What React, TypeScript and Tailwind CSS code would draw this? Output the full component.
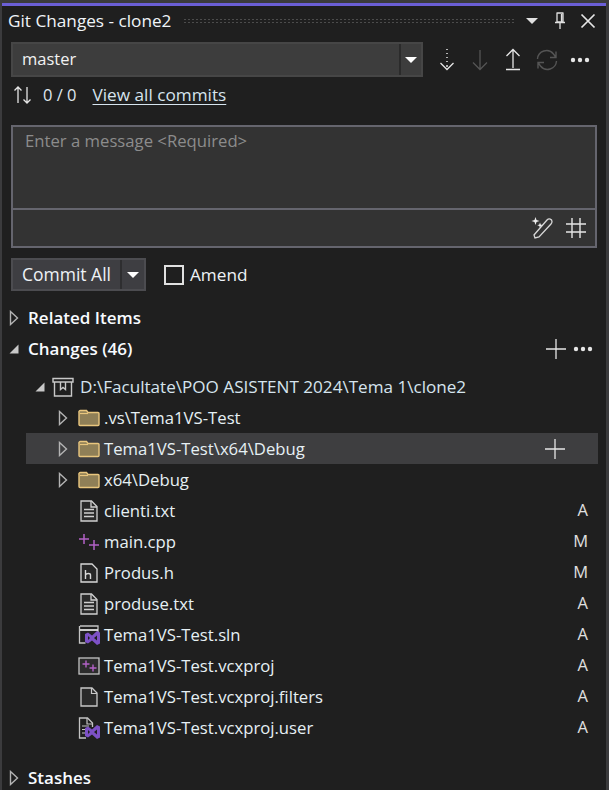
import React from "react";

const font = { fontFamily: '"Open Sans", "Noto Sans", sans-serif' };

function Caret({ open = false, className = "" }: { open?: boolean; className?: string }) {
  return (
    <svg width="12" height="16" viewBox="0 0 12 16" className={className}>
      {open ? (
        <path d="M10.500 3.500v9h-9z" fill="#c8c8c8" />
      ) : (
        <path d="M2.500 1.500l7 6.500-7 6.500z" fill="none" stroke="#b4b4b4" strokeWidth="1.400" />
      )}
    </svg>
  );
}

function Down({ color = "#ffffff" }: { color?: string }) {
  return (
    <svg width="14" height="8" viewBox="0 0 14 8">
      <path d="M1 1h12l-6 6z" fill={color} />
    </svg>
  );
}

function Dots() {
  return (
    <svg width="20" height="6" viewBox="0 0 20 6">
      <circle cx="3" cy="3" r="2.200" fill="#e6e6e6" />
      <circle cx="10" cy="3" r="2.200" fill="#e6e6e6" />
      <circle cx="17" cy="3" r="2.200" fill="#e6e6e6" />
    </svg>
  );
}

function Plus({ size = 20 }: { size?: number }) {
  return (
    <svg width={size} height={size} viewBox="0 0 20 20">
      <path d="M10 0v20M0 10h20" stroke="#e6e6e6" strokeWidth="1.300" fill="none" />
    </svg>
  );
}

function Folder() {
  return (
    <svg width="22" height="18" viewBox="0 0 22 18">
      <path d="M1 3.500V15.500a1 1 0 0 0 1 1h18a1 1 0 0 0 1-1V4.500a1 1 0 0 0-1-1H10L8.500 1.500H2.500a1.500 1.500 0 0 0-1.500 2z" fill="#8f7f57" stroke="#e9c67e" strokeWidth="1.400" />
      <path d="M2 4.500h8" stroke="#e9c67e" strokeWidth="1.200" fill="none" />
    </svg>
  );
}

function TextDoc() {
  return (
    <svg width="18" height="22" viewBox="0 0 18 22">
      <path d="M1 1h10.500L17 6.500V21H1z" fill="#2a2a2a" stroke="#d0d0d0" strokeWidth="1.300" />
      <path d="M11 1v6h6" fill="none" stroke="#d0d0d0" strokeWidth="1.300" />
      <path d="M4 9.500h10M4 13h10M4 16.500h10" stroke="#d0d0d0" strokeWidth="1.300" />
    </svg>
  );
}

function PlusPlus() {
  return (
    <svg width="22" height="18" viewBox="0 0 22 18">
      <path d="M6 1v10M1 6h10M16 7v10M11 12h10" stroke="#b261c6" strokeWidth="1.500" fill="none" />
    </svg>
  );
}

function HeaderDoc() {
  return (
    <svg width="18" height="20" viewBox="0 0 18 20">
      <path d="M1 1h11l5 5v13H1z" fill="#262626" stroke="#d8d8d8" strokeWidth="1.300" />
      <path d="M5.500 7v9M5.500 12c1-2 5-2 5 0v4" fill="none" stroke="#d8d8d8" strokeWidth="1.400" />
    </svg>
  );
}

function VsMark({ x = 0, y = 0 }: { x?: number; y?: number }) {
  return (
    <g transform={`translate(${x} ${y})`}>
      <path d="M0 3l3-1.500 4 3L12 0l3 1.500v11L12 14l-5-4.500-4 3L0 11zM3 5v4l2-2zM12 4.500L9 7l3 2.500z" fill="#7d51c6" fillRule="evenodd" />
    </g>
  );
}

function SlnIcon() {
  return (
    <svg width="22" height="20" viewBox="0 0 22 20">
      <path d="M2 1h18v8M1.500 1v17h6" fill="none" stroke="#c4c4c4" strokeWidth="1.300" />
      <path d="M2 5h18" stroke="#e0e0e0" strokeWidth="1.800" />
      <VsMark x={7} y={6} />
    </svg>
  );
}

function ProjIcon() {
  return (
    <svg width="22" height="18" viewBox="0 0 22 18">
      <rect x="1" y="1" width="20" height="16" fill="#2c2c2c" stroke="#c4c4c4" strokeWidth="1.300" />
      <path d="M8 3.500v7M4.500 7h7M15 7.500v7M11.500 11h7" stroke="#b261c6" strokeWidth="1.400" fill="none" />
    </svg>
  );
}

function BlankDoc() {
  return (
    <svg width="18" height="20" viewBox="0 0 18 20">
      <path d="M1 1h11l5 5v13H1z" fill="#2a2a2a" stroke="#c8c8c8" strokeWidth="1.300" />
      <path d="M11.500 1v5.500H17" fill="none" stroke="#c8c8c8" strokeWidth="1.200" />
    </svg>
  );
}

function UserDoc() {
  return (
    <svg width="22" height="22" viewBox="0 0 22 22">
      <path d="M8 21H1.500V1h8l5 5v4" fill="none" stroke="#c4c4c4" strokeWidth="1.300" />
      <path d="M9 1v6h5.500M4 9h7M4 12.500h3M4 16h3" fill="none" stroke="#c4c4c4" strokeWidth="1.200" />
      <VsMark x={7} y={8} />
    </svg>
  );
}

function RepoIcon() {
  return (
    <svg width="22" height="20" viewBox="0 0 22 20">
      <path d="M1 1.500h20v3.500H1zM2.500 5v14h17V5" fill="none" stroke="#c8c8c8" strokeWidth="1.400" />
      <path d="M8.500 5v7.500l2.500-2 2.500 2V5" fill="none" stroke="#c8c8c8" strokeWidth="1.400" />
    </svg>
  );
}

function Tree({ name, icon, status, hover = false, caret = false }: { name: string; icon: React.ReactNode; status?: string; hover?: boolean; caret?: boolean }) {
  return (
    <div className={`h-[31px] flex items-center pl-[31px] ${hover ? "bg-[#3e3e40]" : ""}`}>
      <div className="w-[14px] shrink-0">{caret && <Caret />}</div>
      <div className="w-[33px] shrink-0 flex justify-center pl-[2px]">{icon}</div>
      <span className="text-[16.700px] text-[#e6f0f4]">{name}</span>
      {hover && <div className="ml-auto mr-[33px]"><Plus /></div>}
      {status && <span className="ml-auto text-[16.500px] text-[#e0e0e0] mr-[10px]">{status}</span>}
    </div>
  );
}

export default function App() {
  return (
    <div style={font} className="w-[609px] h-[790px] overflow-hidden bg-[#1f1f1f] flex flex-col border-l-[2px] border-r-[3px] border-[#3b3b3d] text-[#f1f1f1]">
      <div className="h-[3px] bg-[#3b3b3d] -mx-[2px] shrink-0" />
      <div className="h-[3px] bg-[#6b5fd6] shrink-0" />

      <div className="h-[30px] flex items-center pl-[6px] shrink-0">
        <span className="text-[17.200px] text-[#f0f4f8] whitespace-nowrap">Git Changes - clone2</span>
        <div className="w-[331px] h-[7px] ml-[12px] bg-[radial-gradient(#4c4c4c_1px,transparent_1px)] bg-[length:4px_3px]" />
        <div className="ml-[11px]"><Down color="#e0e0e0" /></div>
        <svg width="14" height="18" viewBox="0 0 14 18" className="ml-[14px]">
          <path d="M3.500 1h7M4 1v9h6V1M2 10.500h10M7 11v6M8.500 2v8" fill="none" stroke="#e0e0e0" strokeWidth="1.300" />
        </svg>
        <svg width="16" height="16" viewBox="0 0 16 16" className="ml-[13px]">
          <path d="M1.500 1.500l13 13M14.500 1.500l-13 13" stroke="#e6e6e6" strokeWidth="1.700" />
        </svg>
      </div>

      <div className="flex items-center mt-[6px] pl-[9px] shrink-0">
        <div className="w-[412px] h-[35px] bg-[#3d3d3d] border-[2px] border-[#464646] flex items-center">
          <span className="text-[16.500px] text-[#f2f2f2] pl-[9px]">master</span>
          <div className="ml-auto w-[22px] h-full border-l-[2px] border-[#2b2b2b] flex items-center justify-center"><Down /></div>
        </div>
        <svg width="16" height="24" viewBox="0 0 16 24" className="ml-[16px]">
          <path d="M8 1v1M8 5v1M8 9v1M8 13v1M8 17v2" stroke="#e6e6e6" strokeWidth="1.500" />
          <path d="M1.500 15L8 21.500 14.500 15" fill="none" stroke="#e6e6e6" strokeWidth="1.300" />
        </svg>
        <svg width="16" height="22" viewBox="0 0 16 22" className="ml-[17px]">
          <path d="M8 1v19M1 13.500L8 20.500l7-7" fill="none" stroke="#555555" strokeWidth="1.300" />
        </svg>
        <svg width="16" height="23" viewBox="0 0 16 23" className="ml-[17px]">
          <path d="M8 1.500V20M1.500 8L8 1.500 14.500 8M1 21.500h14" fill="none" stroke="#e6e6e6" strokeWidth="1.300" />
        </svg>
        <svg width="22" height="22" viewBox="0 0 22 22" className="ml-[15px]">
          <path d="M1.500 10a9 9 0 0 1 16-5l2.500 3.500M20 2.500v6h-6M20.500 12a9 9 0 0 1-16 5L2 13.500M2 19.500v-6h6" fill="none" stroke="#555555" strokeWidth="1.400" />
        </svg>
        <div className="ml-[12px]"><Dots /></div>
      </div>

      <div className="flex items-center h-[30px] mt-[3px] pl-[11px] shrink-0">
        <svg width="20" height="20" viewBox="0 0 20 20">
          <path d="M5 18V2M1.500 5.500L5 2l3.500 3.500M14 2v16M10.500 14.500L14 18l3.500-3.500" fill="none" stroke="#e6e6e6" strokeWidth="1.300" />
        </svg>
        <span className="text-[16.500px] text-[#dfe8ee] ml-[10px]">0 / 0</span>
        <span className="text-[17.200px] text-[#d6e4ee] underline underline-offset-[3px] ml-[16px]">View all commits</span>
      </div>

      <div className="mx-[9px] mt-[15px] h-[123px] border-[2px] border-[#65656e] bg-[#333333] flex flex-col shrink-0">
        <div className="h-[83px] px-[12px] pt-[1px] text-[16.700px] text-[#8c8c8c] border-b-[2px] border-[#65656e]">Enter a message &lt;Required&gt;</div>
        <div className="flex-1 flex items-center justify-end pr-[8px]">
          <svg width="24" height="24" viewBox="0 0 24 24" className="mr-[10px]">
            <path d="M4 22l-1-3L16 4c2-2 5-1 5 1.500 0 1-.5 2-1 2.500L8 21z" fill="none" stroke="#d8d8d8" strokeWidth="1.300" />
            <path d="M4.500 1l1 3 3 1-3 1-1 3-1-3-3-1 3-1zM9 6.500l.7 2 2 .7-2 .7-.7 2-.7-2-2-.7 2-.7z" fill="#eeeeee" />
          </svg>
          <svg width="22" height="22" viewBox="0 0 22 22">
            <path d="M7 1v20M15 1v20M1 7h20M1 15h20" stroke="#e6e6e6" strokeWidth="1.400" />
          </svg>
        </div>
      </div>

      <div className="flex items-center mt-[10px] pl-[9px] shrink-0">
        <div className="h-[33px] flex border-[2px] border-[#4c4c50] bg-[#3e3e42]">
          <span className="w-[109px] text-center text-[17.500px] leading-[28px] text-[#eef2f6] border-r-[2px] border-[#2e2e30]">Commit All</span>
          <div className="w-[22px] flex items-center justify-center"><Down /></div>
        </div>
        <div className="w-[20px] h-[20px] border-[2px] border-[#e0e0e0] ml-[18px]" />
        <span className="text-[17.200px] text-[#eef2f6] ml-[6px]">Amend</span>
      </div>

      <div className="h-[31px] mt-[11px] flex items-center pl-[6px] shrink-0">
        <Caret />
        <span className="text-[17px] font-semibold text-[#f8fbff] ml-[8px]">Related Items</span>
      </div>
      <div className="h-[31px] flex items-center pl-[6px] pr-[13px] shrink-0">
        <Caret open />
        <span className="text-[17px] font-semibold text-[#f8fbff] ml-[8px]">Changes (46)</span>
        <div className="ml-auto"><Plus /></div>
        <div className="ml-[7px]"><Dots /></div>
      </div>

      <div className="h-[31px] mt-[7px] flex items-center pl-[32px] shrink-0">
        <Caret open />
        <div className="ml-[6px]"><RepoIcon /></div>
        <span className="text-[17.100px] text-[#d6e4ee] ml-[6px] whitespace-nowrap">D:\Facultate\POO ASISTENT 2024\Tema 1\clone2</span>
      </div>

      <div className="pl-[24px] pr-[8px] shrink-0">
        <Tree name=".vs\Tema1VS-Test" icon={<Folder />} caret />
        <Tree name="Tema1VS-Test\x64\Debug" icon={<Folder />} caret hover />
        <Tree name="x64\Debug" icon={<Folder />} caret />
        <Tree name="clienti.txt" icon={<TextDoc />} status="A" />
        <Tree name="main.cpp" icon={<PlusPlus />} status="M" />
        <Tree name="Produs.h" icon={<HeaderDoc />} status="M" />
        <Tree name="produse.txt" icon={<TextDoc />} status="A" />
        <Tree name="Tema1VS-Test.sln" icon={<SlnIcon />} status="A" />
        <Tree name="Tema1VS-Test.vcxproj" icon={<ProjIcon />} status="A" />
        <Tree name="Tema1VS-Test.vcxproj.filters" icon={<BlankDoc />} status="A" />
        <Tree name="Tema1VS-Test.vcxproj.user" icon={<UserDoc />} status="A" />
      </div>

      <div className="h-[31px] mt-[19px] flex items-center pl-[6px] shrink-0">
        <Caret />
        <span className="text-[17px] font-semibold text-[#f8fbff] ml-[8px]">Stashes</span>
      </div>
    </div>
  );
}
